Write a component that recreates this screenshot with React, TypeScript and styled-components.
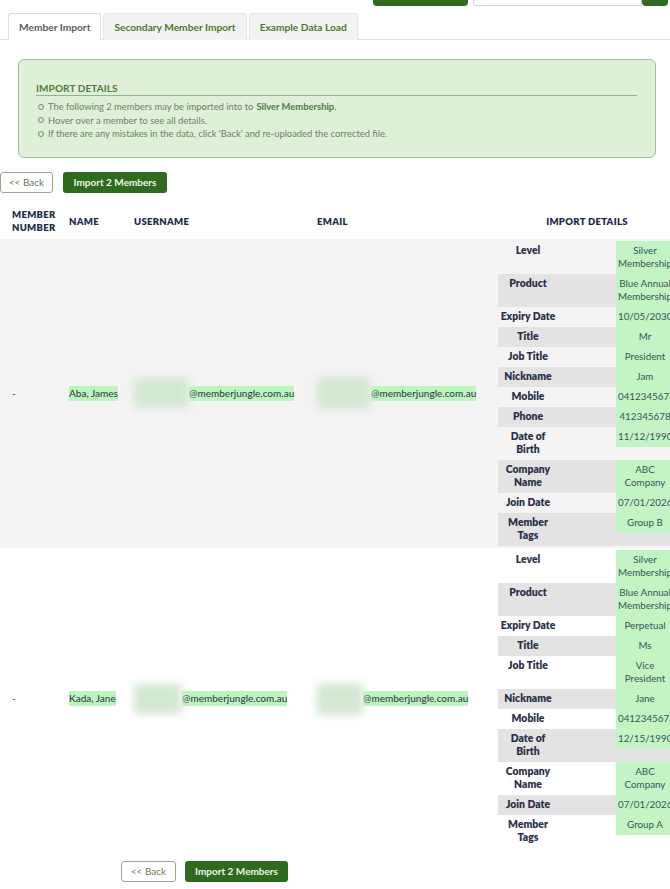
import React from 'react';
import styled, { createGlobalStyle } from 'styled-components';

const GlobalStyle = createGlobalStyle`
  html, body { margin: 0; padding: 0; background: #ffffff; overflow-x: hidden; }
  body { font-family: Lato, "Open Sans", sans-serif; }
  * { box-sizing: border-box; }
`;

const Page = styled.div`
  width: 670px;
  overflow: hidden;
  color: #2d3a48;
  padding-bottom: 7px;
`;

const TopStrip = styled.div`
  height: 6px;
  overflow: hidden;
  display: flex;
  justify-content: flex-end;
  align-items: flex-end;
  gap: 5px;
  padding-right: 2px;
`;

const TopGreen = styled.div<{ $w: number }>`
  width: ${p => p.$w}px;
  height: 30px;
  background: #2f6a1d;
  border-radius: 0 0 4px 4px;
`;

const TopInput = styled.div`
  width: 169px;
  height: 30px;
  background: #fff;
  border: 1px solid #d4d4d4;
  margin-right: -5px;
  border-radius: 0 0 0 3px;
`;

const TabBar = styled.div`
  margin-top: 7px;
  padding-left: 8px;
  display: flex;
  gap: 2px;
  border-bottom: 1px solid #e2e2e2;
`;

const Tab = styled.div<{ $active?: boolean }>`
  height: 27px;
  padding: 0 10px;
  display: flex;
  align-items: center;
  font-size: 10.2px;
  font-weight: 700;
  border: 1px solid ${p => (p.$active ? '#dcdcdc' : '#e6e6e6')};
  border-bottom: none;
  border-radius: 3px 3px 0 0;
  margin-bottom: -1px;
  background: ${p => (p.$active ? '#ffffff' : '#f3f3f3')};
  color: ${p => (p.$active ? '#5b5b5b' : '#4a7a2b')};
`;

const InfoBox = styled.div`
  margin: 19px 14px 0 18px;
  padding: 22px 18px 16px 17px;
  background: #dfefd8;
  border: 1px solid #9cc597;
  border-radius: 6px;
`;

const InfoTitle = styled.div`
  font-size: 10px;
  line-height: 12px;
  font-weight: 700;
  letter-spacing: 0.1px;
  color: #4c7e3c;
  border-bottom: 1px solid #8cb986;
  padding-bottom: 1px;
`;

const InfoList = styled.ul`
  list-style: none;
  margin: 4px 0 0;
  padding: 0 0 0 2px;
`;

const InfoItem = styled.li`
  display: flex;
  align-items: center;
  gap: 4px;
  font-size: 9.4px;
  line-height: 13.5px;
  color: #64895a;
  &::before {
    content: '';
    width: 4px;
    height: 4px;
    border: 1px solid #6b8f61;
    border-radius: 50%;
    flex: none;
  }
  b { color: #4c7e3c; font-weight: 700; margin: 0 0 0 3px; }
`;

const ButtonRow = styled.div<{ $top: number; $left: number; $gap: number }>`
  display: flex;
  gap: ${p => p.$gap}px;
  margin: ${p => p.$top}px 0 0 ${p => p.$left}px;
`;

const BackButton = styled.button<{ $w: number }>`
  width: ${p => p.$w}px;
  height: 21px;
  padding: 0;
  background: #ffffff;
  border: 1px solid #8fae8a;
  border-radius: 3px;
  color: #5f7d5a;
  font-family: Lato, sans-serif;
  font-size: 10px;
`;

const ImportButton = styled.button<{ $w: number }>`
  width: ${p => p.$w}px;
  height: 21px;
  padding: 0;
  background: #2e6b1f;
  border: none;
  border-radius: 3px;
  color: #eef6e8;
  font-family: Lato, sans-serif;
  font-size: 10px;
  font-weight: 700;
`;

const Table = styled.div`
  margin-top: 11px;
  width: 676px;
`;

const Grid = styled.div<{ $bg?: string; $h?: number }>`
  display: grid;
  grid-template-columns: 61px 65px 183px 181px 186px;
  align-items: center;
  background: ${p => p.$bg || 'transparent'};
  ${p => (p.$h ? `height: ${p.$h}px;` : '')}
`;

const HeadCell = styled.div<{ $center?: boolean; $first?: boolean }>`
  padding-left: ${p => (p.$first ? 12 : 8)}px;
  font-size: 9.5px;
  line-height: 13px;
  font-weight: 800;
  letter-spacing: 0.3px;
  color: #1d2a46;
  text-transform: uppercase;
  text-align: ${p => (p.$center ? 'center' : 'left')};
`;

const Cell = styled.div<{ $first?: boolean }>`
  padding-left: ${p => (p.$first ? 12 : 8)}px;
  font-size: 10px;
  line-height: 13px;
  color: #2f4150;
  display: flex;
  align-items: center;
  white-space: nowrap;
`;

const Highlight = styled.span`
  background: #bdf6bd;
  padding: 1px 0;
  font-weight: 500;
`;

const Redacted = styled.span<{ $w: number; $h: number }>`
  display: inline-block;
  width: ${p => p.$w}px;
  height: ${p => p.$h}px;
  background: #d4e7d4;
  filter: blur(4px);
  flex: none;
`;

const DetailsCell = styled.div`
  padding: 2px 0 2px 8px;
  align-self: stretch;
`;

const DetailRow = styled.div<{ $even: boolean }>`
  display: grid;
  grid-template-columns: 60px 58px 58px;
  align-items: start;
  background: ${p => (p.$even ? '#e3e3e3' : 'transparent')};
`;

const DetailLabel = styled.div`
  grid-column: 1;
  padding: 3px 0 4px;
  font-size: 10.4px;
  line-height: 13px;
  font-weight: 800;
  color: #2a3048;
  text-align: center;
`;

const DetailValue = styled.div`
  grid-column: 3;
  padding: 3px 2px 4px;
  font-size: 9.8px;
  line-height: 13px;
  color: #38545c;
  text-align: center;
  background: #c3f4c3;
`;

type Member = {
  name: string;
  userBlur: number;
  emailBlur: number;
  details: [string, string][];
};

const members: Member[] = [
  {
    name: 'Aba, James',
    userBlur: 55,
    emailBlur: 54,
    details: [
      ['Level', 'Silver Membership'],
      ['Product', 'Blue Annual Membership'],
      ['Expiry Date', '10/05/2030'],
      ['Title', 'Mr'],
      ['Job Title', 'President'],
      ['Nickname', 'Jam'],
      ['Mobile', '0412345678'],
      ['Phone', '412345678'],
      ['Date of Birth', '11/12/1990'],
      ['Company Name', 'ABC Company'],
      ['Join Date', '07/01/2026'],
      ['Member Tags', 'Group B'],
    ],
  },
  {
    name: 'Kada, Jane',
    userBlur: 48,
    emailBlur: 46,
    details: [
      ['Level', 'Silver Membership'],
      ['Product', 'Blue Annual Membership'],
      ['Expiry Date', 'Perpetual'],
      ['Title', 'Ms'],
      ['Job Title', 'Vice President'],
      ['Nickname', 'Jane'],
      ['Mobile', '0412345678'],
      ['Date of Birth', '12/15/1990'],
      ['Company Name', 'ABC Company'],
      ['Join Date', '07/01/2026'],
      ['Member Tags', 'Group A'],
    ],
  },
];

export default function App() {
  return (
    <Page>
      <GlobalStyle />
      <TopStrip>
        <TopGreen $w={95} />
        <TopInput />
        <TopGreen $w={26} />
      </TopStrip>
      <TabBar>
        <Tab $active>Member Import</Tab>
        <Tab>Secondary Member Import</Tab>
        <Tab>Example Data Load</Tab>
      </TabBar>
      <InfoBox>
        <InfoTitle>IMPORT DETAILS</InfoTitle>
        <InfoList>
          <InfoItem>
            <span>
              The following 2 members may be imported into to<b>Silver Membership</b>.
            </span>
          </InfoItem>
          <InfoItem>Hover over a member to see all details.</InfoItem>
          <InfoItem>If there are any mistakes in the data, click 'Back' and re-uploaded the corrected file.</InfoItem>
        </InfoList>
      </InfoBox>
      <ButtonRow $top={14} $left={0} $gap={10}>
        <BackButton $w={53}>&lt;&lt; Back</BackButton>
        <ImportButton $w={104}>Import 2 Members</ImportButton>
      </ButtonRow>
      <Table>
        <Grid $h={35}>
          <HeadCell $first>
            Member
            <br />
            Number
          </HeadCell>
          <HeadCell>Name</HeadCell>
          <HeadCell>Username</HeadCell>
          <HeadCell>Email</HeadCell>
          <HeadCell $center>Import Details</HeadCell>
        </Grid>
        {members.map((m, i) => (
          <Grid key={m.name} $bg={i % 2 === 0 ? '#f4f4f4' : '#ffffff'}>
            <Cell $first>-</Cell>
            <Cell>
              <Highlight>{m.name}</Highlight>
            </Cell>
            <Cell>
              <Redacted $w={m.userBlur} $h={30} />
              <Highlight>@memberjungle.com.au</Highlight>
            </Cell>
            <Cell>
              <Redacted $w={m.emailBlur} $h={32} />
              <Highlight>@memberjungle.com.au</Highlight>
            </Cell>
            <DetailsCell>
              {m.details.map(([label, value], j) => (
                <DetailRow key={label} $even={j % 2 === 1}>
                  <DetailLabel>{label}</DetailLabel>
                  <DetailValue>{value}</DetailValue>
                </DetailRow>
              ))}
            </DetailsCell>
          </Grid>
        ))}
      </Table>
      <ButtonRow $top={11} $left={121} $gap={9}>
        <BackButton $w={55}>&lt;&lt; Back</BackButton>
        <ImportButton $w={103}>Import 2 Members</ImportButton>
      </ButtonRow>
    </Page>
  );
}
